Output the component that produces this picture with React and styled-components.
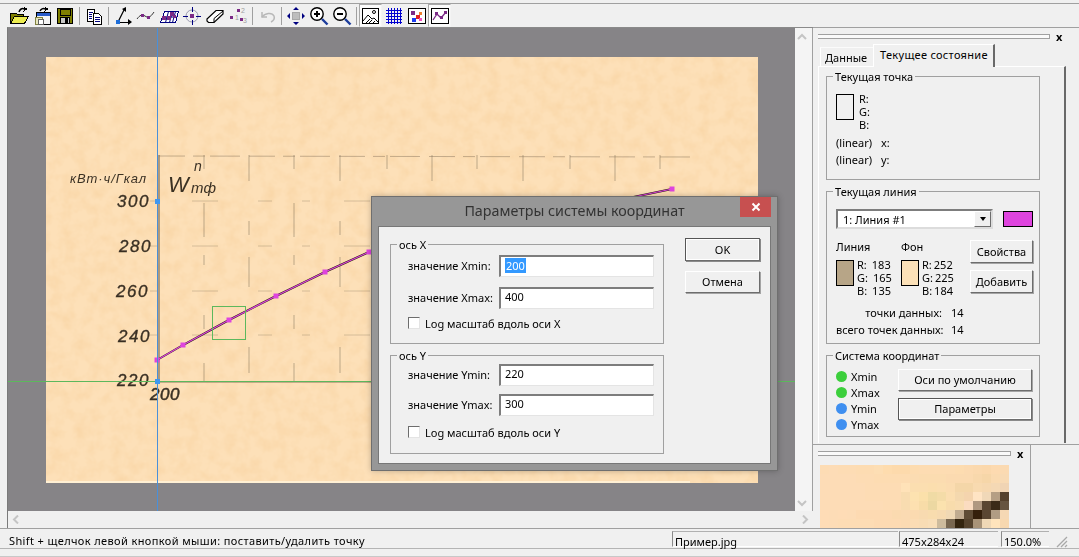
import React from "react";
import styled, { createGlobalStyle, css } from "styled-components";

const GlobalStyle = createGlobalStyle`
  html, body {
    margin: 0;
    padding: 0;
    background: #f0f0f0;
    overflow: hidden;
  }
  * {
    box-sizing: border-box;
  }
`;

const Frame = styled.div`
  position: relative;
  width: 1079px;
  height: 557px;
  padding-top: 3px;
  display: flex;
  flex-direction: column;
  background: #f0f0f0;
  color: #000;
  font-family: "Noto Sans", "Liberation Sans", sans-serif;
  font-size: 11px;
  line-height: 13px;
  border-bottom: 1px solid #c8c8c8;
`;

// Toolbar
const Toolbar = styled.div`
  height: 24px;
  padding-left: 7px;
  display: flex;
  align-items: center;
  border-top: 1px solid #a0a0a0;
`;

const ToolButton = styled.div`
  width: 23px;
  height: 23px;
  display: flex;
  align-items: center;
  justify-content: center;
  ${(p) =>
    p.$pressed &&
    css`
      background: #fbfbfb;
      border: 1px solid;
      border-color: #a8a8a8 #f4f4f4 #f4f4f4 #a8a8a8;
    `}
`;

const ToolSep = styled.div`
  width: 6px;
  height: 18px;
  display: flex;
  justify-content: center;
  &::before {
    content: "";
    width: 1px;
    height: 100%;
    background: #a0a0a0;
  }
`;

// Main area
const Main = styled.div`
  flex: none;
  height: 501px;
  padding-left: 7px;
  display: flex;
`;

const CanvasColumn = styled.div`
  width: 806px;
  display: grid;
  grid-template-columns: 787px 18px;
  grid-template-rows: 483px 17px;
  border-left: 1px solid #7a7a7a;
  border-top: 1px solid #8a8a8a;
`;

const Viewport = styled.div`
  overflow: hidden;
  background: #868487;
  svg {
    display: block;
  }
`;

const VScroll = styled.div`
  display: flex;
  flex-direction: column;
  justify-content: space-between;
  align-items: center;
  padding: 5px 3px 4px 0;
  background: #f4f4f4;
  border-right: 1px solid #a0a0a0;
`;

const HScroll = styled.div`
  display: flex;
  justify-content: space-between;
  align-items: center;
  padding: 0 4px;
  grid-column: 1 / span 2;
`;

const RightPanel = styled.div`
  width: 266px;
  display: flex;
  flex-direction: column;
  border-top: 1px solid #a0a0a0;
`;

const PanelTop = styled.div`
  height: 417px;
  padding-left: 5px;
  border-bottom: 1px solid #a0a0a0;
`;

const GripRow = styled.div`
  height: 17px;
  display: flex;
  align-items: center;
  padding-bottom: 1px;
`;

const Grip = styled.div`
  width: ${(p) => p.$w}px;
  height: 5px;
  background: #fafafa;
  border: 1px solid #a0a0a0;
  border-left: none;
`;

const GripClose = styled.span`
  margin-left: 6px;
  font-weight: 700;
  font-size: 11px;
  line-height: 11px;
`;

const Tabs = styled.div`
  height: 21px;
  padding-left: 2px;
  display: flex;
  align-items: flex-end;
`;

const Tab = styled.div`
  position: relative;
  white-space: nowrap;
  border-top: 1px solid #fff;
  border-left: 1px solid #fff;
  ${(p) =>
    p.$active
      ? css`
          width: 122px;
          height: 23px;
          padding: 3px 0 0 6px;
          margin-bottom: -1px;
          z-index: 1;
          letter-spacing: 0.3px;
          background: #f0f0f0;
          border-right: 2px solid #696969;
        `
      : css`
          width: 53px;
          height: 19px;
          padding: 3px 0 0 4px;
          border-top-color: #fbfbfb;
        `}
`;

const TabBody = styled.div`
  width: 248px;
  height: 377px;
  padding: 3px 0 0 7px;
  display: flex;
  flex-direction: column;
  gap: 5px;
  border-top: 1px solid #fff;
  border-left: 1px solid #fff;
  border-right: 2px solid #696969;
`;

const Group = styled.fieldset`
  margin: 0;
  min-width: 0;
  width: ${(p) => p.$w}px;
  height: ${(p) => p.$h}px;
  padding: 0;
  border: 1px solid #a0a0a0;
`;

const GroupBody = styled.div`
  padding: ${(p) => p.$pad};
`;

const Legend = styled.legend`
  margin-left: 6px;
  padding: 0 2px;
  line-height: 13px;
`;

const PointRow = styled.div`
  display: flex;
  gap: 5px;
  margin-bottom: 5px;
`;

const Swatch = styled.div`
  flex: none;
  width: ${(p) => p.$w || 18}px;
  height: ${(p) => p.$h || 26}px;
  background: ${(p) => p.$color || "transparent"};
  border: 1px solid #000;
`;

const Stack = styled.div`
  margin-top: -2px;
  display: flex;
  flex-direction: column;
`;

const ReadoutValue = styled.span`
  margin-left: ${(p) => p.$gap}px;
`;

const ScaleRow = styled.div`
  display: flex;
  gap: 9px;
  height: 17px;
`;

const LineTop = styled.div`
  display: flex;
  align-items: center;
  gap: 10px;
`;

const Select = styled.div`
  width: 157px;
  height: 20px;
  padding-left: 5px;
  display: flex;
  align-items: center;
  justify-content: space-between;
  background: #fff;
  border: 2px solid;
  border-color: #7d7d7d #dcdcdc #dcdcdc #7d7d7d;
`;

const SelectArrow = styled.div`
  width: 17px;
  height: 16px;
  display: flex;
  align-items: center;
  justify-content: center;
  background: #f0f0f0;
  border: 1px solid;
  border-color: #fff #6d6d6d #6d6d6d #fff;
  &::before {
    content: "";
    border: 3.5px solid transparent;
    border-top: 4px solid #000;
    border-bottom: none;
  }
`;

const LineGrid = styled.div`
  margin-top: 11px;
  display: grid;
  grid-template-columns: 65px 69px 63px;
`;

const ColorRow = styled.div`
  margin-top: 7px;
  display: flex;
  gap: 3px;
`;

const ButtonCol = styled.div`
  display: flex;
  flex-direction: column;
  gap: ${(p) => p.$gap || 7}px;
  padding-top: ${(p) => p.$top || 0}px;
`;

const Button = styled.div`
  width: ${(p) => p.$w}px;
  height: ${(p) => p.$h || 23}px;
  padding-bottom: 1px;
  display: flex;
  align-items: center;
  justify-content: center;
  background: #f0f0f0;
  border: 1px solid;
  border-color: ${(p) => (p.$default ? "#555" : "#fff")} #6d6d6d #6d6d6d ${(p) => (p.$default ? "#555" : "#fff")};
  box-shadow: ${(p) => (p.$default ? "inset 0 0 0 1px #fff, 1px 1px 0 #8a8a8a" : "1px 1px 0 #a4a4a4")};
`;

const Stats = styled.div`
  margin-top: 9px;
  display: grid;
  grid-template-columns: 106px 20px;
  column-gap: 9px;
  row-gap: 4px;
`;

const StatLabel = styled.div`
  text-align: right;
  white-space: nowrap;
`;

const CoordBody = styled.div`
  display: flex;
`;

const DotList = styled.div`
  width: 62px;
  display: flex;
  flex-direction: column;
`;

const DotRow = styled.div`
  height: 16px;
  display: flex;
  align-items: center;
  gap: 4px;
`;

const Dot = styled.span`
  width: 11px;
  height: 11px;
  border-radius: 50%;
  background: ${(p) => p.$color};
`;

const PanelBottom = styled.div`
  height: 83px;
  display: flex;
  flex-direction: column;
  width: 218px;
  padding-left: 5px;
  border-right: 1px solid #a0a0a0;
`;

const Preview = styled.svg`
  display: block;
  flex: none;
  margin: 3px 0 0 2px;
`;

// Status bar
const StatusBar = styled.div`
  height: 21px;
  padding: 0 0 0 7px;
  display: flex;
  align-items: stretch;
  border-top: 1px solid #a0a0a0;
  border-bottom: 1px solid #b4b4b4;
`;

const StatusMessage = styled.div`
  width: 665px;
  padding: 5px 0 0 2px;
  letter-spacing: 0.38px;
  white-space: nowrap;
`;

const StatusPane = styled.div`
  width: ${(p) => p.$w}px;
  margin: 2px ${(p) => p.$gap || 0}px 1px 0;
  padding: 3px 0 0 2px;
  white-space: nowrap;
  border-left: 1px solid #8a8a8a;
  border-top: 1px solid #b0b0b0;
  border-bottom: 1px solid #fff;
`;

const SizeGrip = styled.svg`
  margin: 7px 0 0 7px;
`;

// Dialog
const Dialog = styled.div`
  position: absolute;
  left: 371px;
  top: 196px;
  width: 407px;
  height: 275px;
  padding: 0 6px 6px;
  display: flex;
  flex-direction: column;
  background: #979797;
  border: 1px solid #6f6f6f;
  box-shadow: 0 0 6px rgba(0, 0, 0, 0.25);
`;

const DialogTitle = styled.div`
  height: 29px;
  display: flex;
  align-items: center;
  justify-content: center;
  color: #333;
  font-size: 14.3px;
  padding-bottom: 3px;
`;

const CloseButton = styled.div`
  position: absolute;
  right: 6px;
  top: 0;
  width: 31px;
  height: 20px;
  display: flex;
  align-items: center;
  justify-content: center;
  background: #c75050;
`;

const DialogClient = styled.div`
  flex: 1;
  padding: 11px 0 0 11px;
  display: flex;
  gap: 21px;
  background: #f0f0f0;
  border: 1px solid #777;
`;

const DialogGroups = styled.div`
  display: flex;
  flex-direction: column;
  gap: 5px;
`;

const FieldRow = styled.div`
  display: flex;
  align-items: center;
  height: 22px;
  margin-bottom: ${(p) => p.$gap}px;
`;

const FieldLabel = styled.div`
  width: 91px;
  padding-bottom: 1px;
  white-space: nowrap;
`;

const InputBox = styled.div`
  width: 155px;
  height: 22px;
  padding: 1px 0 0 4px;
  background: #fff;
  border: 2px solid;
  border-color: #7d7d7d #e4e4e4 #e4e4e4 #7d7d7d;
  border-right-width: 1px;
  border-bottom-width: 1px;
`;

const Selected = styled.span`
  display: inline-block;
  padding: 1px 1px;
  background: #3399ff;
  color: #fff;
`;

const CheckRow = styled.div`
  display: flex;
  align-items: center;
  gap: 5px;
  height: 14px;
`;

const CheckBox = styled.div`
  width: 12px;
  height: 12px;
  background: #fff;
  border: 1px solid;
  border-color: #6d6d6d #e4e4e4 #e4e4e4 #6d6d6d;
`;

const Chevron = ({ dir }) => {
  const pts = {
    up: "1,6 5,2 9,6",
    down: "1,2 5,6 9,2",
    left: "6,0.5 2,4.5 6,8.5",
    right: "2,0.5 6,4.5 2,8.5",
  }[dir];
  const vertical = dir === "up" || dir === "down";
  return (
    <svg width={vertical ? 10 : 8} height={vertical ? 8 : 9}>
      <polyline points={pts} fill="none" stroke="#c4c4c4" strokeWidth="2" />
    </svg>
  );
};

// Toolbar icons, all on a 20x20 grid
const Icon = ({ children }) => (
  <svg width="20" height="20" viewBox="0 0 20 20" shapeRendering="crispEdges">
    {children}
  </svg>
);

const Sq = ({ x, y, s = 3, c = "#7b2a86" }) => <rect x={x} y={y} width={s} height={s} fill={c} />;

const icons = {
  open: (
    <Icon>
      <path d="M1.500 7.500h6l1 1h6v3H6L2.500 17h-1z" fill="#808000" stroke="#000" />
      <path d="M1.500 17.500L5.500 10.500h14l-4 7z" fill="#ecec50" stroke="#000" />
      <path d="M10 6c1-3 3-4 5-3" fill="none" stroke="#000" strokeWidth="1.500" shapeRendering="auto" />
      <path d="M14.500 0.500l4 2.500-4 2.500z" fill="#000" />
    </Icon>
  ),
  importImg: (
    <Icon>
      <rect x="4.500" y="6.500" width="14" height="12" fill="#f4f4f4" stroke="#000" />
      <rect x="5" y="7" width="13" height="3" fill="#2a5cc8" />
      <rect x="3.500" y="11.500" width="7" height="7" fill="#e8e8c0" stroke="#808040" />
      <rect x="6.500" y="13.500" width="5" height="5" fill="#fff" stroke="#606060" />
      <path d="M8 5c1-2 3-3 5-2" fill="none" stroke="#000" strokeWidth="1.500" shapeRendering="auto" />
      <path d="M12.500 0.500l4 2.500-4 2.500z" fill="#000" />
    </Icon>
  ),
  save: (
    <Icon>
      <rect x="2.500" y="2.500" width="15" height="15" fill="#808000" stroke="#000" />
      <rect x="5" y="3" width="10" height="6" fill="#808000" stroke="#000" />
      <rect x="5.500" y="11.500" width="9" height="6" fill="#c8c8c8" stroke="#000" />
      <rect x="10" y="12" width="3" height="5" fill="#000" />
    </Icon>
  ),
  copy: (
    <Icon>
      <path d="M3.500 3.500h7v12h-7z" fill="#fff" stroke="#000" />
      <path d="M9.500 7.500h5l3 3v8h-8z" fill="#fff" stroke="#000" />
      <path d="M5 6h4M5 8h3M5 10h3M5 12h3M11 11h5M11 13h5M11 15h5" stroke="#000080" />
    </Icon>
  ),
  axes: (
    <Icon>
      <path d="M5 16L11 4" stroke="#000" strokeWidth="1.300" shapeRendering="auto" />
      <path d="M9 3l4-2 0 5z" fill="#000" shapeRendering="auto" />
      <path d="M5 16h13" stroke="#000" />
      <path d="M15 13l4 3-4 3z" fill="#000" shapeRendering="auto" />
      <rect x="3" y="14" width="4" height="4" fill="#1c6cd8" />
    </Icon>
  ),
  curve: (
    <Icon>
      <path d="M1 13c3-4 5-5 8-3s5 2 9-4" fill="none" stroke="#222" strokeWidth="0.900" shapeRendering="auto" />
      <Sq x="5" y="8" s="3" />
      <Sq x="11" y="10" s="3" />
    </Icon>
  ),
  gridPts: (
    <Icon>
      <path d="M5.500 5.500h14l-3 11h-15z" fill="#fff" stroke="#000080" />
      <path d="M9.500 5.500l-3 11M13.500 5.500l-3 11M16.500 5.500l-3 11M3 11h15" stroke="#000080" shapeRendering="auto" />
      <Sq x="3" y="10" s="4" />
      <Sq x="8" y="10" s="4" />
      <Sq x="11" y="6" s="4" />
      <Sq x="14" y="9" s="3" />
    </Icon>
  ),
  target: (
    <Icon>
      <circle cx="10" cy="10" r="6" fill="none" stroke="#9a9ab0" shapeRendering="auto" />
      <path d="M10 1v5M10 14v5M1 10h5M14 10h5" stroke="#000080" />
      <Sq x="8" y="8" s="4" />
    </Icon>
  ),
  eraser: (
    <Icon>
      <g shapeRendering="auto">
        <path d="M2 13L11 4.500h7L18 8l-9 8.500H3.500L2 15z" fill="#fff" stroke="#000" strokeWidth="1.200" />
        <path d="M9 16.500V12.500L18 5" fill="none" stroke="#000" />
      </g>
    </Icon>
  ),
  numbers: (
    <Icon>
      <Sq x="9" y="3" />
      <Sq x="2" y="10" />
      <Sq x="12" y="12" />
      <text x="13" y="7" fontSize="7" fill="#a0a0a0" fontFamily="Liberation Sans">2</text>
      <text x="7" y="14" fontSize="7" fill="#a0a0a0" fontFamily="Liberation Sans">1</text>
      <text x="15" y="17" fontSize="7" fill="#a0a0a0" fontFamily="Liberation Sans">3</text>
    </Icon>
  ),
  undo: (
    <Icon>
      <g shapeRendering="auto">
        <path d="M5 6v5h5" fill="none" stroke="#b8b8b8" strokeWidth="1.500" />
        <path d="M5 11c3-4 10-5 12-1 1 3-1 5-3 6" fill="none" stroke="#b8b8b8" strokeWidth="1.500" />
      </g>
    </Icon>
  ),
  move: (
    <Icon>
      <rect x="6.500" y="6.500" width="7" height="7" fill="#bdbdbd" stroke="#a8a8a8" />
      <path d="M10 1l3 3H7zM10 19l3-3H7zM1 10l3-3v6zM19 10l-3-3v6z" fill="#000080" shapeRendering="auto" />
    </Icon>
  ),
  zoomIn: (
    <Icon>
      <g shapeRendering="auto">
        <circle cx="8" cy="8" r="6.200" fill="#fff" stroke="#000" strokeWidth="1.400" />
        <path d="M5 8h6M8 5v6" stroke="#000" strokeWidth="2" />
        <path d="M13 13l5.500 5.500" stroke="#1c3c9c" strokeWidth="2.400" />
      </g>
    </Icon>
  ),
  zoomOut: (
    <Icon>
      <g shapeRendering="auto">
        <circle cx="8" cy="8" r="6.200" fill="#fff" stroke="#000" strokeWidth="1.400" />
        <path d="M5 8h6" stroke="#000" strokeWidth="2" />
        <path d="M13 13l5.500 5.500" stroke="#1c3c9c" strokeWidth="2.400" />
      </g>
    </Icon>
  ),
  picture: (
    <Icon>
      <rect x="1.500" y="2.500" width="16" height="15" fill="#fff" stroke="#000" strokeWidth="1.400" />
      <circle cx="13" cy="6" r="1.500" fill="none" stroke="#000" shapeRendering="auto" />
      <path d="M2 15l5-6 4 4 2-1 4 4M5 17l4-4M8 17l3-3M12 17l2-2" fill="none" stroke="#000" shapeRendering="auto" />
    </Icon>
  ),
  mesh: (
    <Icon>
      <path d="M2 4h16M2 7h16M2 10h16M2 13h16M2 16h16M4 2v16M7 2v16M10 2v16M13 2v16M16 2v16" stroke="#0000d0" />
    </Icon>
  ),
  points: (
    <Icon>
      <rect x="1.500" y="2.500" width="17" height="15" fill="#fff" stroke="#000" strokeWidth="1.400" />
      <Sq x="4" y="5" s="4" />
      <Sq x="12" y="6" s="3" c="#f08030" />
      <Sq x="9" y="9" s="4" c="#e02020" />
      <Sq x="5" y="12" s="4" c="#1c3cf0" />
      <Sq x="12" y="12" s="3" c="#f050c0" />
    </Icon>
  ),
  lineFrame: (
    <Icon>
      <rect x="1.500" y="2.500" width="17" height="15" fill="#fff" stroke="#000" strokeWidth="1.400" />
      <path d="M3 14l4-6 4 4 5-6" fill="none" stroke="#7b2a86" strokeWidth="1.300" shapeRendering="auto" />
      <Sq x="5" y="6" s="3" />
      <Sq x="10" y="10" s="3" />
      <Sq x="14" y="5" s="3" />
    </Icon>
  ),
};

const toolbarItems = [
  "open", "importImg", "save", "|", "copy", "|", "axes", "curve", "gridPts", "target", "eraser", "numbers", "|",
  "undo", "|", "move", "zoomIn", "zoomOut", "|", "picture", "mesh", "points", "lineFrame",
];
const pressedTools = ["picture", "lineFrame"];

// Curve on the scanned chart, in page coordinates
const curvePoints = [[157, 360], [183, 345], [229, 320], [276, 296], [325, 272], [369, 252], [672, 189]];
const gridX = [204, 249, 294, 340, 387, 432, 477, 523, 570, 615, 660];
const gridY = [201, 246, 291, 335];
const yLabels = [
  ["300", 117, 207],
  ["280", 119, 252],
  ["260", 116, 297],
  ["240", 118, 342],
  ["220", 117, 386],
];

const ScanChart = () => {
  const curve = curvePoints.map((p) => p.join(",")).join(" ");
  return (
    <svg width="787" height="483" viewBox="8 28 787 483">
      <defs>
        <filter id="paper" x="0" y="0" width="100%" height="100%" colorInterpolationFilters="sRGB">
          <feTurbulence type="fractalNoise" baseFrequency="0.08" numOctaves="3" seed="4" />
          <feColorMatrix values="0 0 0 0 0.97  0 0 0 0 0.82  0 0 0 0 0.62  0 0 0 1.100 -0.400" />
        </filter>
        <filter id="soft">
          <feGaussianBlur stdDeviation="0.4" />
        </filter>
      </defs>
      <rect x="46" y="57" width="712" height="426" fill="#fde0b8" />
      <rect x="46" y="57" width="712" height="426" filter="url(#paper)" />
      <rect x="46" y="481" width="644" height="2" fill="#fff0d4" />
      <g filter="url(#soft)">
        <line x1="159" y1="155" x2="159" y2="381" stroke="#6f5c46" strokeWidth="1.400" opacity="0.75" />
        {gridX.map((x, i) => (
          <line
            key={x}
            x1={x}
            y1="155"
            x2={x}
            y2="381"
            stroke="#7f6c54"
            strokeDasharray={i % 2 ? "26 40 14 22 30 60" : "14 34 34 18 10 50"}
            opacity="0.5"
          />
        ))}
        <line x1="159" y1="156" x2="691" y2="157" stroke="#7f6c54" strokeDasharray="26 8 12 5 30 9" opacity="0.45" />
        {gridY.map((y) => (
          <line key={y} x1="150" y1={y} x2="372" y2={y} stroke="#8f7c62" strokeDasharray="8 34 26 40 14 30" opacity="0.35" />
        ))}
        <line x1="159" y1="382" x2="372" y2="382" stroke="#7f6c54" strokeWidth="1.600" opacity="0.6" />
        <g fontFamily="Liberation Sans" fontStyle="italic" fill="#3a3024">
          <text x="70" y="183" fontSize="13" letterSpacing="0.900">кВт·ч/Гкал</text>
          <text x="168" y="192" fontSize="22">W</text>
          <text x="194" y="171" fontSize="14">n</text>
          <text x="191" y="193" fontSize="15">тф</text>
          {yLabels.map(([t, x, y]) => (
            <text key={t} x={x} y={y} fontSize="17" letterSpacing="1.500" stroke="#3a3024" strokeWidth="0.350">{t}</text>
          ))}
          <text x="150" y="400" fontSize="17" letterSpacing="0.500" stroke="#3a3024" strokeWidth="0.500">200</text>
        </g>
      </g>
      <polyline points={curve} fill="none" stroke="#2a1c10" strokeWidth="2" />
      <polyline points={curve} fill="none" stroke="#de44de" strokeWidth="1.200" />
      {curvePoints.map(([x, y]) => (
        <rect key={x} x={x - 2.500} y={y - 2.500} width="5" height="5" fill="#de44de" />
      ))}
      <line x1="157.500" y1="28" x2="157.500" y2="511" stroke="#4a90d9" />
      <line x1="8" y1="381.500" x2="795" y2="381.500" stroke="#5cb85c" />
      <rect x="155" y="199" width="5" height="5" fill="#3f97f0" />
      <rect x="155" y="379" width="5" height="5" fill="#3f97f0" />
      <rect x="212.500" y="306.500" width="33" height="33" fill="none" stroke="#5cb85c" />
    </svg>
  );
};

const pixelBase = [
  "fddcb4 fddcb6 fddcb4 fddcb4 fddcb2 fddcb2 fddeb4 fedcae fddaac fddaac fddcb0 fddcb2 fddcb2 fddcb2 fddcb2 fddcb0 fcdab0 fbd9ae fbd8ac fddab0 fbdab2",
  "fddcb6 fddcb6 fddcb6 fddcb6 fddcb4 fddcb4 fddcb2 fddcb2 fddcb2 fddcb2 fbdcb2 fbdcb0 fbdcb0 fbdcb0 fbdab0 fbdab0 fbdab0 f8d8ac f6d6a8 fadab0 f8dab4",
  "fddcb6 fddcb6 fddcb6 fddcb6 fddcb6 fddcb4 fddcb4 fddcb4 fddcb4 ffe2b8 fbdeb0 fbdeb0 fbdeae fbdeb0 fbdcb0 f4d6a8 f4d6a8 f8dab0 f6d8b0 f4d8b4 f0d4b4",
  "fddcb6 fddcb6 fddcb6 fddcb6 fddcb6 fddcb4 fddcb4 fddcb4 fddcb4 f8dcb0 fde2b0 fbe0aa f0dba5 f4dca8 fbdeb0 f4d8ae f4d4ae ffe4c4 f0d8b8 b59f85 54402c",
  "fddcb6 fddcb6 fddcb6 fddcb6 fddcb6 fddcb6 fddcb6 fddcb4 fddcb4 f8dcb0 fde0b0 f8dca8 ecd8a2 fbe2ae f8dcac f8dcb0 fbdcc0 b09880 5a4632 3a2a18 665440",
  "fedcb6 fddcb6 fedcb6 fddcb6 fddab2 fddab2 fddab2 fddab2 fbdab0 fbdab2 fbdab0 f8dab0 f8dcae f6dab0 f0d8b4 c0ab90 5f4c36 35200c 5a4632 b09c84 f5d8b4",
  "fedcb6 fddcb6 fddcb4 fddcb4 fddcb4 fddcb4 fddab2 fddab2 fddab2 fbdab2 fbdcb4 f8dcb4 f8deb8 cdbb9d 786750 33240f 54422d a89378 efd8b6 ffe4bc f7d8b0",
].map((row) => row.split(" "));

const Readout = ({ rows, gap }) => (
  <Stack>
    {rows.map(([k, v]) => (
      <div key={k}>
        {k}:{v ? <ReadoutValue $gap={gap}>{v}</ReadoutValue> : null}
      </div>
    ))}
  </Stack>
);

const App = () => {
  return (
    <Frame>
      <GlobalStyle />
      <Toolbar>
        {toolbarItems.map((name, i) =>
          name === "|" ? (
            <ToolSep key={i} />
          ) : (
            <ToolButton key={name} $pressed={pressedTools.includes(name)}>
              {icons[name]}
            </ToolButton>
          )
        )}
      </Toolbar>

      <Main>
        <CanvasColumn>
          <Viewport>
            <ScanChart />
          </Viewport>
          <VScroll>
            <Chevron dir="up" />
            <Chevron dir="down" />
          </VScroll>
          <HScroll>
            <Chevron dir="left" />
            <Chevron dir="right" />
          </HScroll>
        </CanvasColumn>

        <RightPanel>
          <PanelTop>
            <GripRow>
              <Grip $w={232} />
              <GripClose>x</GripClose>
            </GripRow>
            <Tabs>
              <Tab>Данные</Tab>
              <Tab $active>Текущее состояние</Tab>
            </Tabs>
            <TabBody>
              <Group $w={214} $h={110}>
                <Legend>Текущая точка</Legend>
                <GroupBody $pad="11px 0 0 9px">
                  <PointRow>
                    <Swatch />
                    <Readout rows={[["R"], ["G"], ["B"]]} />
                  </PointRow>
                  <ScaleRow>
                    <span>(linear)</span>
                    <span>x:</span>
                  </ScaleRow>
                  <ScaleRow>
                    <span>(linear)</span>
                    <span>y:</span>
                  </ScaleRow>
                </GroupBody>
              </Group>

              <Group $w={214} $h={159}>
                <Legend>Текущая линия</Legend>
                <GroupBody $pad="11px 0 0 9px">
                  <LineTop>
                    <Select>
                      1: Линия #1
                      <SelectArrow />
                    </Select>
                    <Swatch $w={30} $h={16} $color="#de44de" />
                  </LineTop>
                  <LineGrid>
                    <div>
                      Линия
                      <ColorRow>
                        <Swatch $color="#b7a587" />
                        <Readout rows={[["R", "183"], ["G", "165"], ["B", "135"]]} gap={5} />
                      </ColorRow>
                    </div>
                    <div>
                      Фон
                      <ColorRow>
                        <Swatch $color="#fce1b8" />
                        <Readout rows={[["R", "252"], ["G", "225"], ["B", "184"]]} gap={2} />
                      </ColorRow>
                    </div>
                    <ButtonCol>
                      <Button $w={63}>Свойства</Button>
                      <Button $w={63}>Добавить</Button>
                    </ButtonCol>
                  </LineGrid>
                  <Stats>
                    <StatLabel>точки данных:</StatLabel>
                    <div>14</div>
                    <StatLabel>всего точек данных:</StatLabel>
                    <div>14</div>
                  </Stats>
                </GroupBody>
              </Group>

              <Group $w={214} $h={88}>
                <Legend>Система координат</Legend>
                <GroupBody $pad="6px 0 0 9px">
                  <CoordBody>
                    <DotList>
                      <DotRow><Dot $color="#3ccf3c" />Xmin</DotRow>
                      <DotRow><Dot $color="#3ccf3c" />Xmax</DotRow>
                      <DotRow><Dot $color="#3f8ff0" />Ymin</DotRow>
                      <DotRow><Dot $color="#3f8ff0" />Ymax</DotRow>
                    </DotList>
                    <ButtonCol $top={1}>
                      <Button $w={134} $h={22}>Оси по умолчанию</Button>
                      <Button $w={134} $h={22} $default>Параметры</Button>
                    </ButtonCol>
                  </CoordBody>
                </GroupBody>
              </Group>
            </TabBody>
          </PanelTop>

          <PanelBottom>
            <GripRow>
              <Grip $w={193} />
              <GripClose>x</GripClose>
            </GripRow>
            <Preview width="189" height="63" viewBox="0 0 21 7" shapeRendering="crispEdges">
              {pixelBase.map((row, y) =>
                row.map((c, x) => <rect key={x + "-" + y} x={x} y={y} width="1" height="1" fill={"#" + c} />)
              )}
            </Preview>
          </PanelBottom>
        </RightPanel>
      </Main>

      <StatusBar>
        <StatusMessage>Shift + щелчок левой кнопкой мыши: поставить/удалить точку</StatusMessage>
        <StatusPane $w={226} $gap={1}>Пример.jpg</StatusPane>
        <StatusPane $w={99} $gap={3}>475x284x24</StatusPane>
        <StatusPane $w={48}>150.0%</StatusPane>
        <SizeGrip width="12" height="12" viewBox="0 0 12 12">
          <path d="M11 1L1 11M11 5L5 11M11 9L9 11" stroke="#a8a8a8" strokeWidth="1.300" />
        </SizeGrip>
      </StatusBar>

      <Dialog>
        <DialogTitle>Параметры системы координат</DialogTitle>
        <CloseButton>
          <svg width="10" height="10" viewBox="0 0 10 10">
            <path d="M1.500 1.500l7 7M8.500 1.500l-7 7" stroke="#fff" strokeWidth="2" />
          </svg>
        </CloseButton>
        <DialogClient>
          <DialogGroups>
            <Group $w={274} $h={106}>
              <Legend>ось X</Legend>
              <GroupBody $pad="4px 0 0 17px">
                <FieldRow $gap={10}>
                  <FieldLabel>значение Xmin:</FieldLabel>
                  <InputBox><Selected>200</Selected></InputBox>
                </FieldRow>
                <FieldRow $gap={7}>
                  <FieldLabel>значение Xmax:</FieldLabel>
                  <InputBox>400</InputBox>
                </FieldRow>
                <CheckRow>
                  <CheckBox />
                  Log масштаб вдоль оси X
                </CheckRow>
              </GroupBody>
            </Group>
            <Group $w={274} $h={105}>
              <Legend>ось Y</Legend>
              <GroupBody $pad="2px 0 0 17px">
                <FieldRow $gap={8}>
                  <FieldLabel>значение Ymin:</FieldLabel>
                  <InputBox>220</InputBox>
                </FieldRow>
                <FieldRow $gap={9}>
                  <FieldLabel>значение Ymax:</FieldLabel>
                  <InputBox>300</InputBox>
                </FieldRow>
                <CheckRow>
                  <CheckBox />
                  Log масштаб вдоль оси Y
                </CheckRow>
              </GroupBody>
            </Group>
          </DialogGroups>
          <ButtonCol $gap={10}>
            <Button $w={75} $default>OK</Button>
            <Button $w={75} $h={22}>Отмена</Button>
          </ButtonCol>
        </DialogClient>
      </Dialog>
    </Frame>
  );
};

export default App;
